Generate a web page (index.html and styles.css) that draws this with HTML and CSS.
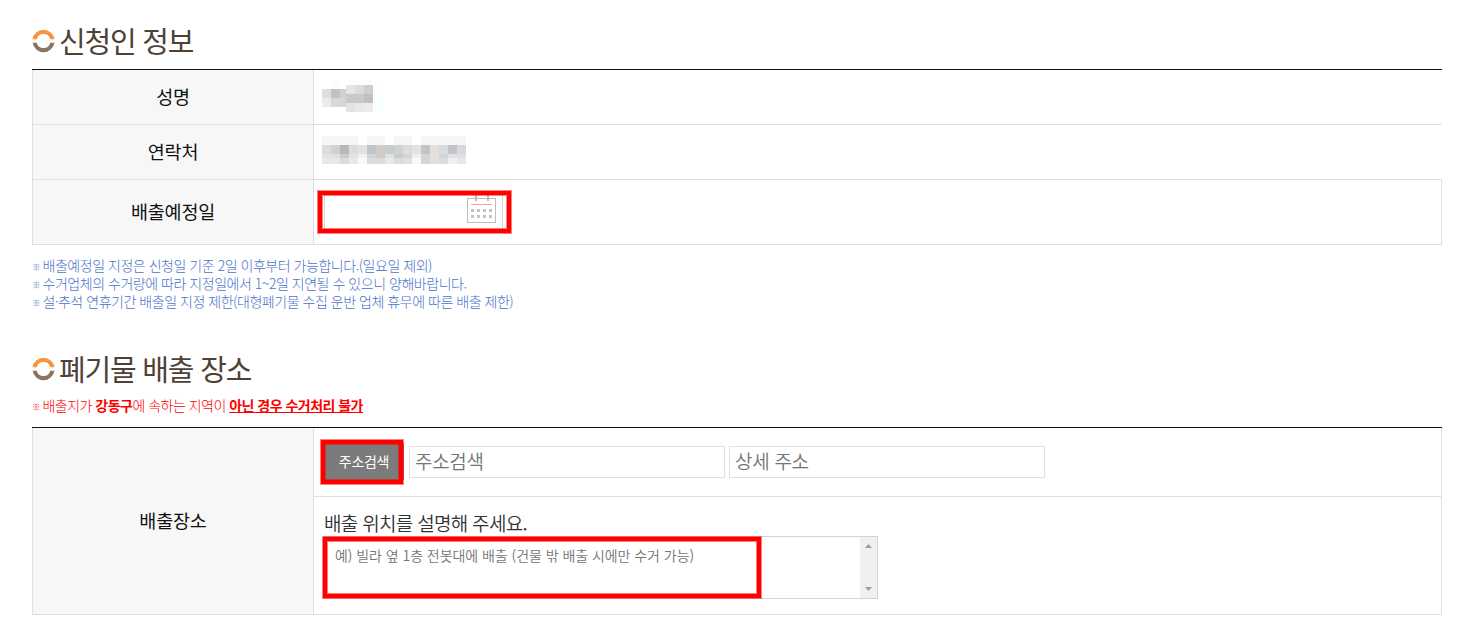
FILE: index.html
```html
<!DOCTYPE html>
<html lang="ko">

<head>
  <meta charset="UTF-8">
  <meta name="viewport" content="width=device-width, initial-scale=1.0">
  <link rel="stylesheet" href="styles.css">
  <title>대형폐기물 배출 신청</title>
</head>

<body>
  <section class="applicant">
    <h2>
      <svg class="ring" width="24" height="24" viewBox="0 0 24 24">
        <path fill="#fb923c" d="M.6 10.300A11 11 0 0 1 22.400 10.300H18.300A7 7 0 0 0 4.700 10.300z" />
        <path fill="#8a7560" d="M.6 13.700A11 11 0 0 0 22.400 13.700H18.300A7 7 0 0 1 4.700 13.700z" />
      </svg>
      <span>신청인 정보</span>
    </h2>
    <table>
      <tr class="open">
        <th>성명</th>
        <td>
          <svg class="masked name" width="60" height="36" shape-rendering="crispEdges">
            <path fill="#fcfcfc" d="M9 4h9v9h-9zM27 4h23v5h-23z" />
            <path fill="#dedddf" d="M0 13h9v9h-9z" />
            <path fill="#c3c1c3" d="M9 13h9v9h-9z" />
            <path fill="#d4d0cc" d="M18 13h6v9h-6z" />
            <path fill="#edebea" d="M0 22h9v9h-9z" />
            <path fill="#d8d8da" d="M9 22h9v9h-9z" />
            <path fill="#d9d4d1" d="M18 22h6v9h-6z" />
            <path fill="#e4e6e8" d="M24 9h9v9h-9z" />
            <path fill="#dcdcdd" d="M33 9h9v9h-9z" />
            <path fill="#d1cdcf" d="M42 9h9v9h-9z" />
            <path fill="#c9c8cb" d="M24 18h18v9h-18z" />
            <path fill="#c4bec2" d="M42 18h9v9h-9z" />
            <path fill="#e3e3e5" d="M24 27h9v9h-9z" />
            <path fill="#e8e8e9" d="M33 27h9v9h-9z" />
            <path fill="#eeecea" d="M42 27h9v9h-9z" />
            <path fill="#f9ffff" d="M51 10h9v26h-9z" />
          </svg>
        </td>
      </tr>
      <tr class="open">
        <th>연락처</th>
        <td>
          <svg class="masked" width="144" height="28" shape-rendering="crispEdges">
            <path fill="#f5f5f5" d="M0 0h36v9h-36zM45 0h18v9h-18zM72 0h18v9h-18zM99 0h45v9h-45z" />
            <path fill="#dcdcdc" d="M0 9h9v9h-9zM27 9h9v9h-9zM81 9h9v9h-9z" />
            <path fill="#d0d1d3" d="M9 9h9v9h-9zM72 9h9v9h-9z" />
            <path fill="#b8b8b8" d="M18 9h9v9h-9z" />
            <path fill="#e2e2df" d="M36 9h9v9h-9zM90 9h9v9h-9z" />
            <path fill="#c3c4c8" d="M45 9h9v9h-9zM99 9h9v9h-9zM126 9h9v9h-9z" />
            <path fill="#d2ccc6" d="M54 9h9v9h-9z" />
            <path fill="#c6ccd0" d="M63 9h9v9h-9z" />
            <path fill="#e4dfdc" d="M108 9h9v19h-9z" />
            <path fill="#d9dadd" d="M117 9h9v9h-9zM135 9h9v9h-9z" />
            <path fill="#e3e2e0" d="M0 18h9v4h-9zM27 18h9v4h-9zM126 18h9v4h-9z" />
            <path fill="#dde1e4" d="M9 18h9v4h-9zM63 18h9v4h-9zM135 18h9v4h-9zM81 22h9v6h-9z" />
            <path fill="#cecbc9" d="M18 18h9v4h-9zM54 18h9v4h-9zM72 18h9v4h-9z" />
            <path fill="#d3d5d8" d="M45 18h9v4h-9zM81 18h9v4h-9zM99 18h9v10h-9zM117 18h9v4h-9z" />
            <path fill="#f1f0ee" d="M36 18h9v4h-9zM90 18h9v4h-9zM126 22h9v6h-9z" />
            <path fill="#e7e8ea" d="M0 22h18v6h-18zM27 22h9v6h-9zM63 22h9v6h-9zM135 22h9v6h-9z" />
            <path fill="#dedbd9" d="M18 22h9v6h-9zM45 22h18v6h-18zM72 22h9v6h-9zM117 22h9v6h-9z" />
            <path fill="#fbf9f6" d="M36 22h9v6h-9zM90 22h9v6h-9z" />
          </svg>
        </td>
      </tr>
      <tr class="date_row">
        <th>배출예정일</th>
        <td>
          <div class="date">
            <svg class="cal" width="29" height="28" shape-rendering="crispEdges">
              <path fill="#bcbcbc" fill-rule="evenodd" d="M0 3h29v25h-29zM1 4v23h27v-23z" />
              <path fill="#bcbcbc" d="M8 0h2v6h-2zM20 0h2v6h-2z" />
              <path fill="#f4a09c" d="M4 9h21v1h-21z" />
              <path fill="#c4c4c4" d="M4 14h3v3h-3zM10 14h3v3h-3zM16 14h3v3h-3zM22 14h3v3h-3zM4 20h3v3h-3zM10 20h3v3h-3zM16 20h3v3h-3zM22 20h3v3h-3z" />
            </svg>
            <i class="mark"></i>
          </div>
        </td>
      </tr>
    </table>
    <ul class="notes">
      <li><span class="ref">※</span>배출예정일 지정은 신청일 기준 2일 이후부터 가능합니다.(일요일 제외)</li>
      <li><span class="ref">※</span>수거업체의 수거량에 따라 지정일에서 1~2일 지연될 수 있으니 양해바랍니다.</li>
      <li><span class="ref">※</span>설·추석 연휴기간 배출일 지정 제한(대형폐기물 수집 운반 업체 휴무에 따른 배출 제한)</li>
    </ul>
  </section>

  <section class="place">
    <h2>
      <svg class="ring" width="24" height="24" viewBox="0 0 24 24">
        <path fill="#fb923c" d="M.6 10.300A11 11 0 0 1 22.400 10.300H18.300A7 7 0 0 0 4.700 10.300z" />
        <path fill="#8a7560" d="M.6 13.700A11 11 0 0 0 22.400 13.700H18.300A7 7 0 0 1 4.700 13.700z" />
      </svg>
      <span>폐기물 배출 장소</span>
    </h2>
    <p class="warn"><span class="ref">※</span>배출지가 <b>강동구</b>에 속하는 지역이 <b class="line">아닌 경우 수거처리 불가</b></p>
    <table>
      <tr class="addr_row">
        <th rowspan="2">배출장소</th>
        <td>
          <div class="addr">
            <div class="search">주소검색<i class="mark"></i></div>
            <input type="text" placeholder="주소검색">
            <input type="text" placeholder="상세 주소">
          </div>
        </td>
      </tr>
      <tr class="desc_row">
        <td>
          <p class="guide">배출 위치를 설명해 주세요.</p>
          <div class="area">
            <span>예) 빌라 옆 1층 전봇대에 배출 (건물 밖 배출 시에만 수거 가능)</span>
            <div class="scroll">
              <svg width="7" height="4"><path fill="#a0a0a0" d="M0 4L3.500 0L7 4z" /></svg>
              <svg width="7" height="4"><path fill="#a0a0a0" d="M0 0L3.500 4L7 0z" /></svg>
            </div>
            <i class="mark"></i>
          </div>
        </td>
      </tr>
    </table>
  </section>
</body>

</html>
```
FILE: styles.css
```css
* {
  box-sizing: border-box;
}

body {
  margin: 0;
  padding: 20px 25px 0 32px;
  height: 635px;
  overflow: hidden;
  background: #fff;
  color: #333;
  font-family: "Noto Sans CJK KR", sans-serif;
}

h2 {
  display: flex;
  align-items: center;
  gap: 3px;
  margin: 0;
  height: 42px;
  color: #4e4236;
  font-size: 29px;
  font-weight: 400;
  line-height: 40px;
  letter-spacing: -1.2px;
}

h2 span {
  padding-bottom: 2px;
}

.applicant h2 {
  margin-bottom: 7px;
}

.ring {
  flex: none;
}

table {
  width: 1410px;
  border-spacing: 0;
  border-top: 1px solid #111;
  table-layout: fixed;
}

th {
  width: 282px;
  padding: 0 0 2px;
  background: #f7f7f7;
  border: 1px solid #dfdfdf;
  border-top: 0;
  color: #111;
  font-size: 18.5px;
  font-weight: 400;
  line-height: 26px;
  letter-spacing: -0.2px;
}

td {
  height: 55px;
  padding: 0;
  border-bottom: 1px solid #dfdfdf;
  border-right: 1px solid #dfdfdf;
  vertical-align: top;
}

.open td {
  border-right-color: #fff;
}

.masked {
  display: block;
  margin: 11px 0 0 8px;
}

.masked.name {
  margin-top: 6px;
}

.date_row td {
  height: 65px;
}

.date {
  position: relative;
  display: flex;
  justify-content: flex-end;
  width: 179px;
  height: 36px;
  margin: 14px 0 0 10px;
  padding: 0 6px 0 0;
  border: 1px solid #d5d5d5;
}

.cal {
  flex: none;
}

/* red guide boxes drawn over the fields */
.mark {
  position: absolute;
  border: 4px solid #f00;
  box-shadow: 0 0 0 1px rgba(255, 0, 0, .5), inset 0 0 0 1px rgba(255, 0, 0, .5);
}

.date .mark {
  top: -4px;
  left: -7px;
  width: 193px;
  height: 42px;
}

.notes {
  margin: 11px 0 0;
  padding: 0;
  list-style: none;
  color: #4a72c8;
  font-size: 14px;
  font-weight: 300;
  line-height: 18px;
  letter-spacing: -0.47px;
}

.ref {
  display: inline-block;
  width: 10.5px;
  font-size: 8.5px;
  font-weight: 500;
  line-height: 9px;
  vertical-align: 1px;
}

.place {
  margin-top: 38px;
}

.warn {
  margin: 0;
  height: 37px;
  color: #f00;
  font-size: 14px;
  font-weight: 300;
  line-height: 30px;
  letter-spacing: -0.52px;
}

.warn b {
  font-weight: 700;
}

.line {
  text-decoration: underline;
}

.addr_row td {
  height: 69px;
}

.addr {
  display: flex;
  align-items: center;
  gap: 4px;
  padding: 15px 0 0 10px;
}

.search {
  position: relative;
  width: 80px;
  height: 37px;
  margin-right: 1px;
  background: #7b7b7b;
  color: #fff;
  font-size: 14px;
  line-height: 36px;
  letter-spacing: -0.3px;
  text-align: center;
}

.search .mark {
  top: -3px;
  left: -3px;
  width: 82px;
  height: 44px;
}

.addr input {
  width: 316px;
  height: 32px;
  padding: 0 5px 2px;
  border: 1px solid #dfdfdf;
  font: 350 19px "Noto Sans CJK KR", sans-serif;
  letter-spacing: -0.3px;
}

.addr input::placeholder {
  color: #757575;
}

.desc_row td {
  height: 118px;
  padding-left: 10px;
}

.guide {
  margin: 13px 0 0;
  height: 26px;
  font-size: 19px;
  font-weight: 350;
  line-height: 26px;
  letter-spacing: -0.7px;
}

.area {
  position: relative;
  display: flex;
  justify-content: space-between;
  width: 554px;
  height: 63px;
  border: 1px solid #d3d3d3;
  color: #757575;
  font-size: 14px;
  font-weight: 350;
  line-height: 18px;
}

.area span {
  padding: 9px 0 0 10px;
  letter-spacing: -0.05px;
}

.area .mark {
  top: 0;
  left: -2px;
  width: 438px;
  height: 61px;
}

.scroll {
  display: flex;
  flex-direction: column;
  justify-content: space-between;
  align-items: center;
  width: 17px;
  padding: 7px 0;
  background: #f0f0f0;
}
```
